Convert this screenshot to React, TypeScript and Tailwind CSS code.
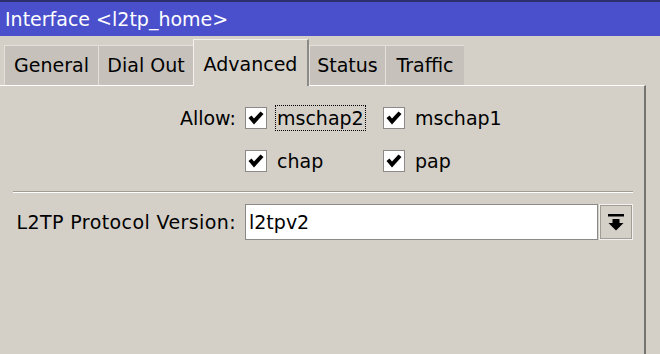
import React from 'react';

const TABS = [
    { label: 'General', w: 'w-[94px]' },
    { label: 'Dial Out', w: 'w-[95px]' },
    { label: 'Advanced', w: 'w-[116px]', active: true },
    { label: 'Status', w: 'w-[76px]' },
    { label: 'Traffic', w: 'w-[79px]' },
];

function Check({ label, focused }: { label: string; focused?: boolean }) {
    return (
        <div className="flex items-center gap-[8px]">
            <div className="w-[22px] h-[22px] bg-white border border-[#8c8a86] flex items-center justify-center">
                <svg width="16" height="14" viewBox="0 0 16 14">
                    <path d="M0.5 7 L3.5 4.5 L6 7.5 L12.5 0.5 L15.5 3 L6 13.5 Z" fill="#000" />
                </svg>
            </div>
            <span className={focused ? 'border border-dotted border-black px-[1px] leading-[24px]' : 'leading-[24px] px-[2px]'}>
                {label}
            </span>
        </div>
    );
}

export default function App() {
    return (
        <div
            className="w-[660px] h-[354px] bg-[#d4d0c8] overflow-hidden flex flex-col text-black text-[19px]"
            style={{ fontFamily: '"DejaVu Sans", Verdana, sans-serif' }}
        >
            {/* Title bar */}
            <div className="h-[36px] shrink-0 bg-[#4a50cc] border-t-2 border-[#2c2f6e] flex items-center pl-[5px] text-white text-[19px]">
                Interface &lt;l2tp_home&gt;
            </div>

            {/* Tabs */}
            <div className="h-[49px] shrink-0 flex items-end pl-[4px] relative z-10">
                {TABS.map((t) =>
                    t.active ? (
                        <div
                            key={t.label}
                            className={`${t.w} h-[47px] -mb-px bg-[#d4d0c8] border-l border-t border-[#f4f2ee] border-r-2 border-r-[#8c8a86] flex items-start justify-center pt-[10px]`}
                        >
                            {t.label}
                        </div>
                    ) : (
                        <div
                            key={t.label}
                            className={`${t.w} h-[40px] bg-[#c6c2bb] border-l border-t border-[#e4e1db] flex items-center justify-center`}
                        >
                            {t.label}
                        </div>
                    )
                )}
            </div>

            {/* Panel */}
            <div className="flex-1 mr-[14px] border-t border-white border-r-2 border-r-[#76746f] flex flex-col pt-[19px]">
                <div className="flex items-center h-[26px]">
                    <div className="w-[236px] text-right">Allow:</div>
                    <div className="ml-[9px] w-[138px]">
                        <Check label="mschap2" focused />
                    </div>
                    <Check label="mschap1" />
                </div>
                <div className="flex items-center h-[26px] mt-[17px]">
                    <div className="w-[236px]" />
                    <div className="ml-[9px] w-[138px]">
                        <Check label="chap" />
                    </div>
                    <Check label="pap" />
                </div>

                <div className="mt-[17px] ml-[13px] mr-[11px] border-t border-[#a09d97] border-b border-b-white" />

                <div className="flex items-center mt-[11px]">
                    <div className="w-[236px] text-right tracking-[0.4px]">L2TP Protocol Version:</div>
                    <div className="ml-[9px] w-[353px] h-[36px] bg-white border border-[#8c8a86] flex items-center pl-[3px]">
                        l2tpv2
                    </div>
                    <div className="ml-[1px] w-[34px] h-[36px] border border-[#f4f2ee] outline outline-1 outline-[#a09d97] -outline-offset-2 flex items-center justify-center">
                        <svg width="16" height="17" viewBox="0 0 16 17">
                            <rect x="0" y="0" width="16" height="2.5" fill="#000" />
                            <path d="M4.5 5 H11.5 V9 H15.5 L8 16.5 L0.5 9 H4.5 Z" fill="#000" />
                        </svg>
                    </div>
                </div>
            </div>
        </div>
    );
}
